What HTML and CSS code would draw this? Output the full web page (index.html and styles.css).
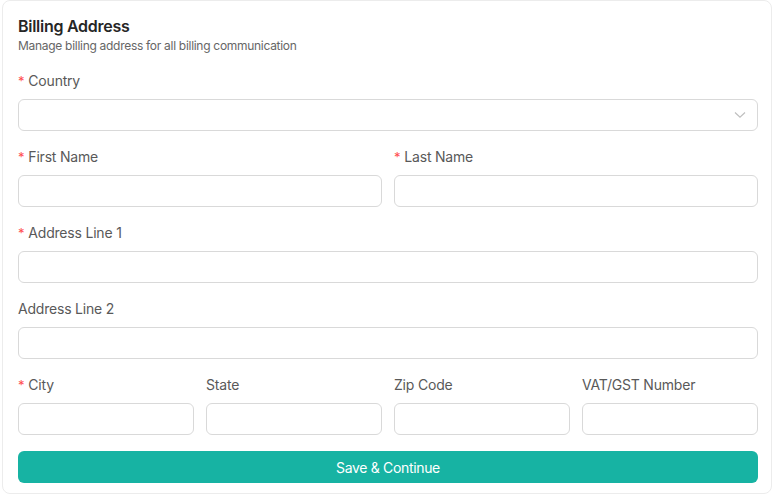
FILE: index.html
```html
<!DOCTYPE html>
<html lang="en">
<head>
<meta charset="utf-8">
<title>Billing Address</title>
<link rel="stylesheet" href="styles.css">
</head>
<body>
<div class="card">
  <h1 class="title">Billing Address</h1>
  <p class="subtitle">Manage billing address for all billing communication</p>
  <form class="form">
    <div class="row cols-1">
      <div class="field">
        <label class="label"><span class="req">*</span>Country</label>
        <div class="select">
          <svg class="chev" width="12" height="8" viewBox="0 0 12 8"><path d="M1 1.5 L6 6.2 L11 1.5" fill="none" stroke="#bfbfbf" stroke-width="1.2"/></svg>
        </div>
      </div>
    </div>
    <div class="row cols-2">
      <div class="field">
        <label class="label"><span class="req">*</span>First Name</label>
        <input class="input" type="text">
      </div>
      <div class="field">
        <label class="label"><span class="req">*</span>Last Name</label>
        <input class="input" type="text">
      </div>
    </div>
    <div class="row cols-1">
      <div class="field">
        <label class="label"><span class="req">*</span>Address Line 1</label>
        <input class="input" type="text">
      </div>
    </div>
    <div class="row cols-1">
      <div class="field">
        <label class="label">Address Line 2</label>
        <input class="input" type="text">
      </div>
    </div>
    <div class="row cols-4">
      <div class="field">
        <label class="label"><span class="req">*</span>City</label>
        <input class="input" type="text">
      </div>
      <div class="field">
        <label class="label">State</label>
        <input class="input" type="text">
      </div>
      <div class="field">
        <label class="label">Zip Code</label>
        <input class="input" type="text">
      </div>
      <div class="field">
        <label class="label">VAT/GST Number</label>
        <input class="input" type="text">
      </div>
    </div>
    <button class="btn" type="button">Save &amp; Continue</button>
  </form>
</div>
</body>
</html>
```
FILE: styles.css
```css
html, body {
  margin: 0;
  padding: 0;
  background: #ffffff;
}
body {
  font-family: Inter, "Noto Sans", sans-serif;
  color: #262626;
}
.card {
  box-sizing: border-box;
  margin: 0 3px 0 2px;
  width: 770px;
  height: 494px;
  border: 1px solid #ececec;
  border-radius: 8px;
  padding: 14px 13px 0 15px;
  background: #fff;
}
.title {
  margin: 0;
  font-size: 16px;
  line-height: 22px;
  font-weight: 600;
  letter-spacing: -0.27px;
  color: #262626;
}
.subtitle {
  margin: 0;
  font-size: 12px;
  line-height: 18px;
  letter-spacing: -0.29px;
  color: #666;
}
.form {
  margin-top: 15px;
  display: flex;
  flex-direction: column;
}
.row {
  display: grid;
  column-gap: 12px;
  margin-bottom: 15px;
}
.cols-1 { grid-template-columns: 1fr; }
.cols-2 { grid-template-columns: 1fr 1fr; }
.cols-4 { grid-template-columns: repeat(4, 1fr); margin-bottom: 16px; }
.field {
  display: flex;
  flex-direction: column;
}
.label {
  font-size: 14px;
  line-height: 22px;
  letter-spacing: -0.2px;
  color: #595959;
  margin-bottom: 7px;
}
.req {
  color: #ff4d4f;
  margin-right: 4px;
  font-size: 13px;
}
.input, .select {
  box-sizing: border-box;
  height: 32px;
  width: 100%;
  border: 1px solid #d9d9d9;
  border-radius: 6px;
  background: #fff;
  margin: 0;
  padding: 4px 11px;
  font: inherit;
}
.select {
  display: flex;
  align-items: center;
  justify-content: flex-end;
}
.btn {
  height: 32px;
  width: 100%;
  border: none;
  border-radius: 6px;
  background: #17b3a3;
  color: #fff;
  font-family: Inter, "Noto Sans", sans-serif;
  font-size: 14px;
  letter-spacing: -0.33px;
  padding: 0;
}
```
